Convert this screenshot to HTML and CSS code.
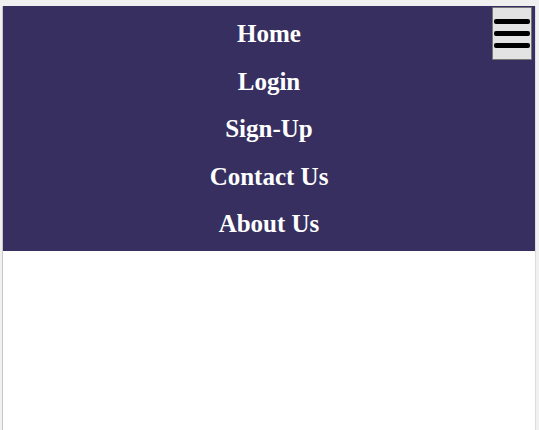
FILE: index.html
```html
<!DOCTYPE html>
<html>
<head>
<meta charset="utf-8">
<link rel="stylesheet" href="styles.css">
</head>
<body>
<div class="frame">
  <nav class="nav">
    <ul class="menu">
      <li><a href="#">Home</a></li>
      <li><a href="#">Login</a></li>
      <li><a href="#">Sign-Up</a></li>
      <li><a href="#">Contact Us</a></li>
      <li><a href="#">About Us</a></li>
    </ul>
    <button class="toggle" aria-label="Menu">
      <span class="bar"></span>
      <span class="bar"></span>
      <span class="bar"></span>
    </button>
  </nav>
</div>
</body>
</html>
```

FILE: styles.css
```css
html {
  background: #f0f0f0;
}
body {
  margin: 0;
  height: 430px;
  overflow: hidden;
  font-family: "Liberation Serif", "Times New Roman", serif;
}
.frame {
  margin: 6px 3px 0 2px;
  border-left: 1px solid #c8c8c8;
  border-right: 1px solid #dcdcdc;
  background: #ffffff;
  height: 430px;
}
.nav {
  position: relative;
  background: #372f5f;
  padding: 4px 0 3.5px;
}
.menu {
  list-style: none;
  margin: 0;
  padding: 0;
}
.menu li {
  text-align: center;
  font-size: 25px;
  font-weight: bold;
  line-height: 47.5px;
}
.menu a {
  color: #ffffff;
  text-decoration: none;
}
.toggle {
  position: absolute;
  top: 1px;
  right: 3px;
  width: 40px;
  height: 53px;
  margin: 0;
  padding: 0;
  background: #e3e3e3;
  border: 1px solid #767676;
  border-radius: 1px;
  display: flex;
  flex-direction: column;
  align-items: center;
  justify-content: center;
  gap: 7px;
}
.bar {
  display: block;
  width: 36px;
  height: 5px;
  background: #000000;
  border-radius: 2px;
}
```
